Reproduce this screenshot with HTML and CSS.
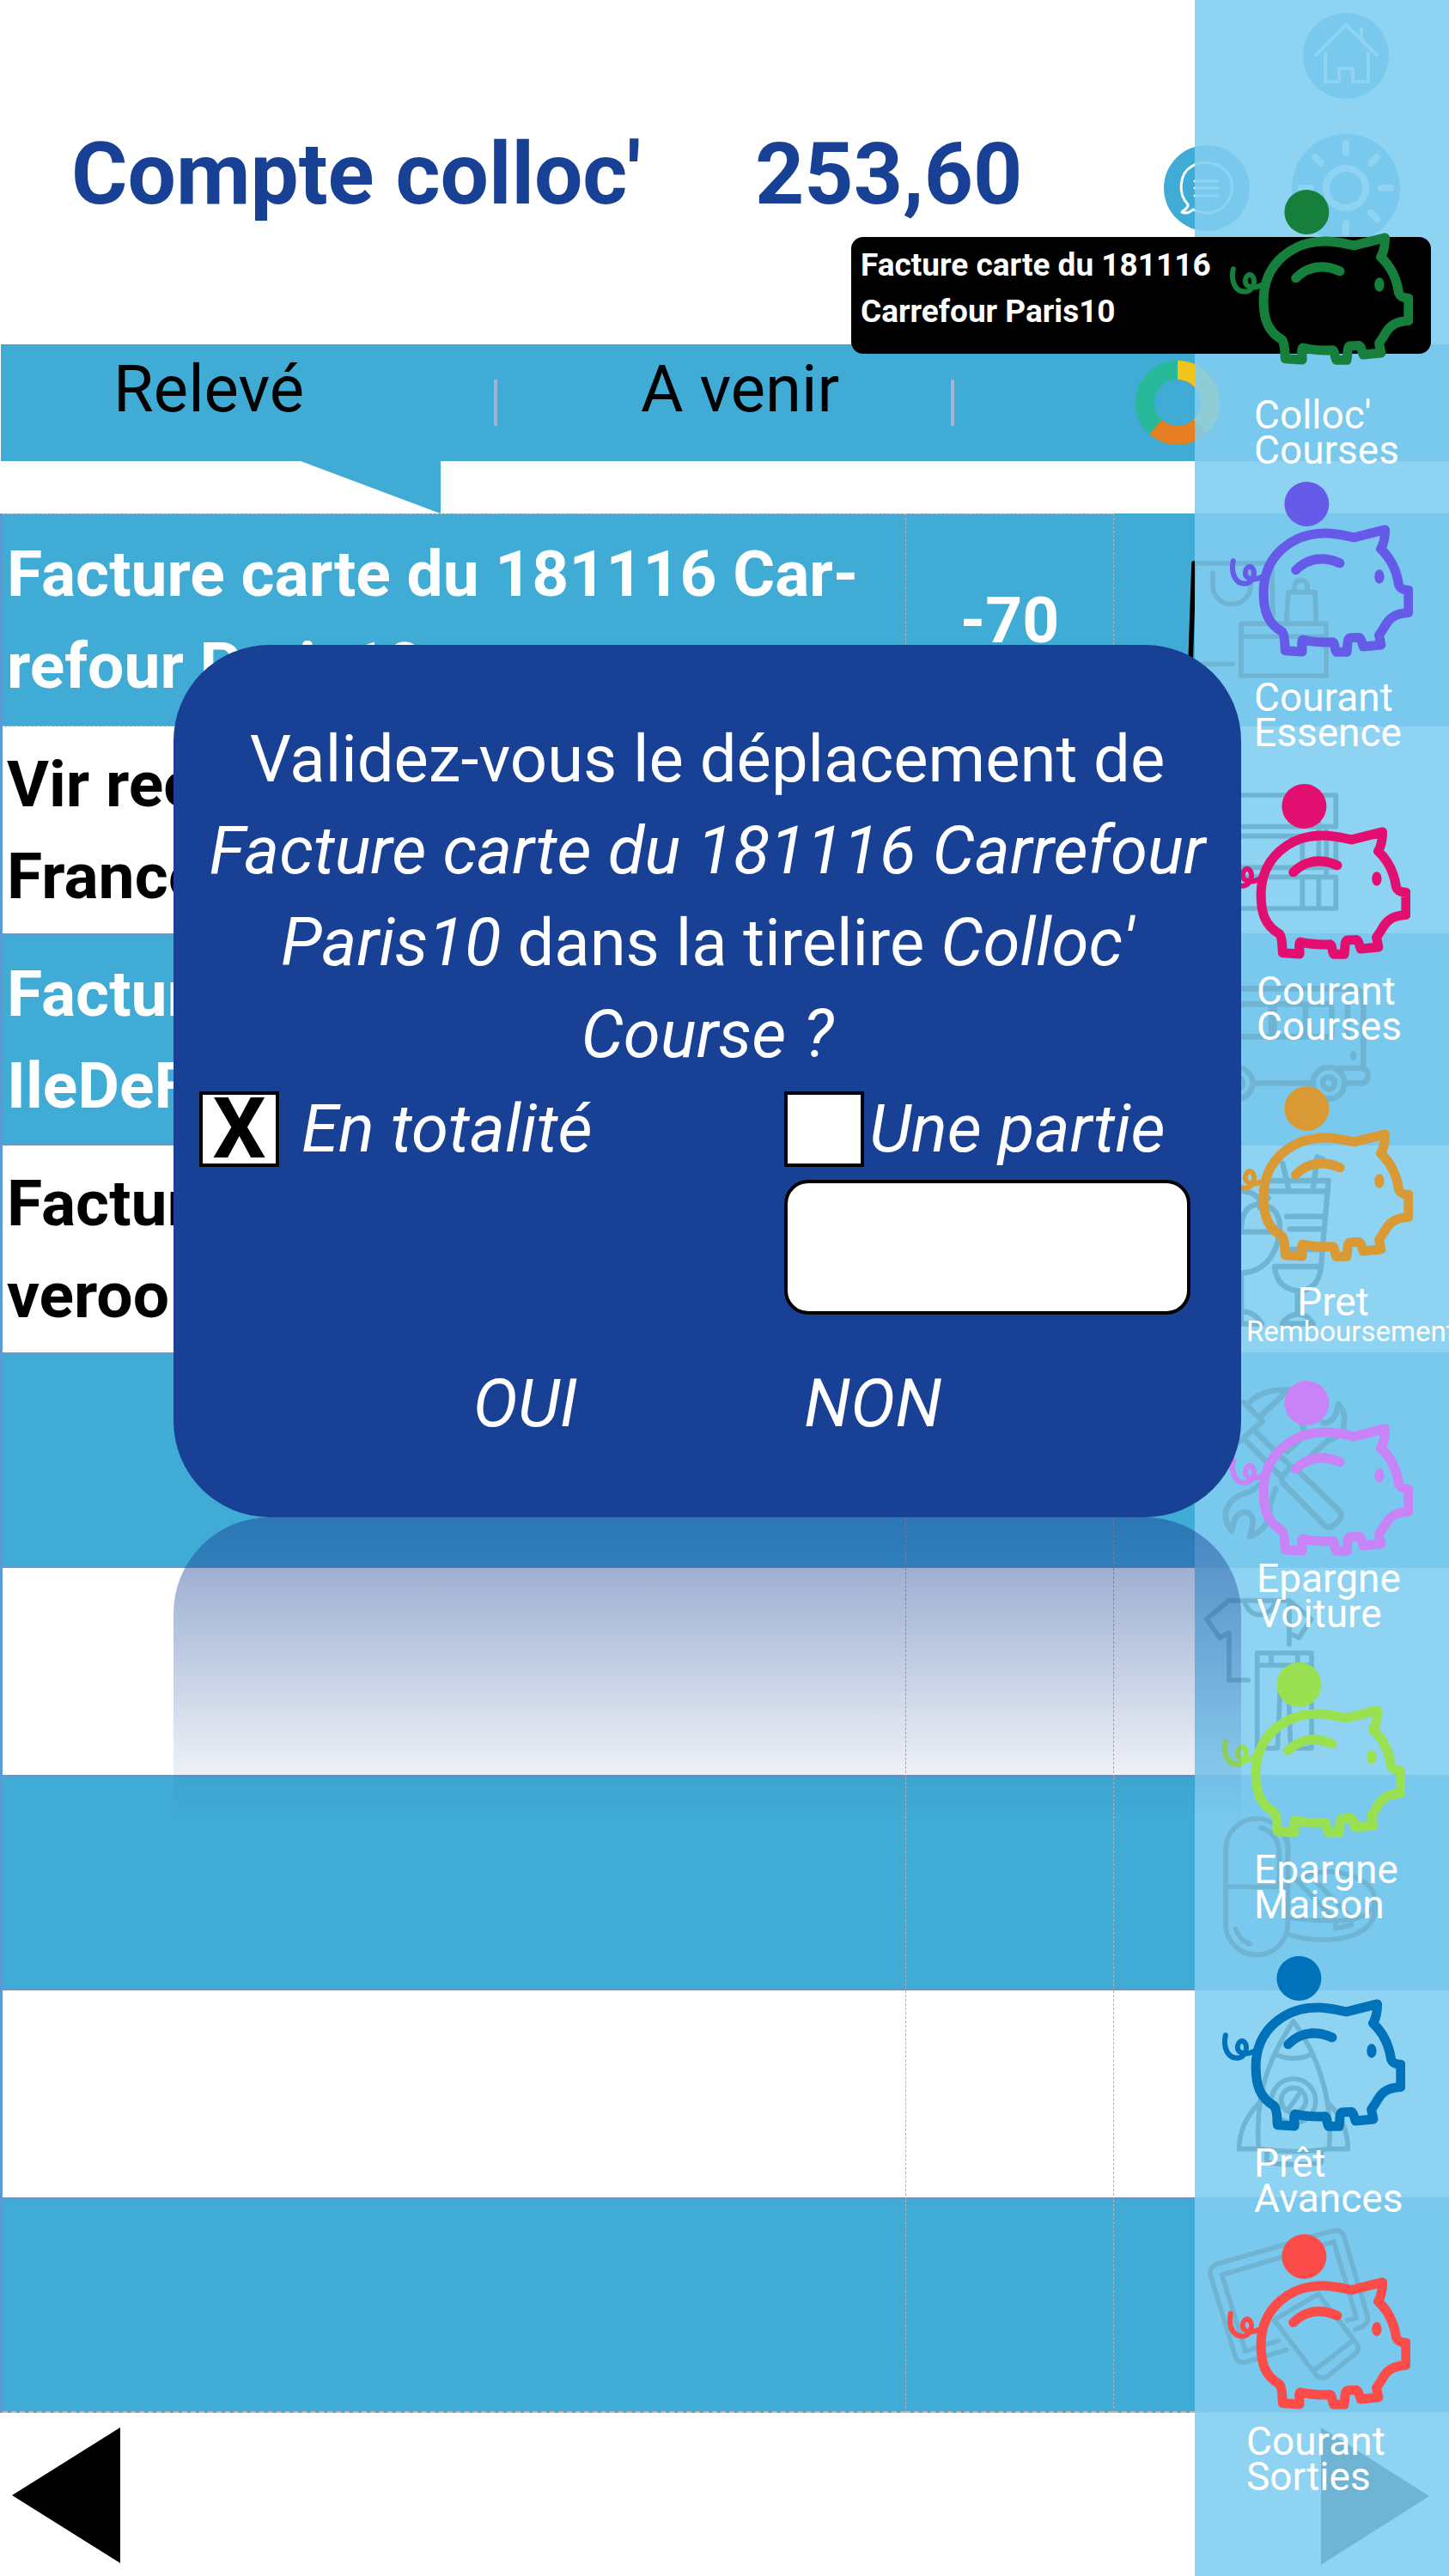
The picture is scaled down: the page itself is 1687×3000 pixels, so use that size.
FILE: index.html
```html
<!DOCTYPE html>
<html lang="fr">
<head>
<meta charset="utf-8">
<meta name="viewport" content="width=device-width, initial-scale=1">
<title>Compte colloc'</title>
<link rel="stylesheet" href="styles.css">
</head>
<body>
<svg class="defs" aria-hidden="true">
  <symbol id="pig" viewBox="216 67 639 613">
    <circle cx="484" cy="145" r="78" fill="currentColor"/>
    <g fill="none" stroke="currentColor" stroke-linecap="round" stroke-linejoin="round">
      <path stroke-width="33" d="M550 247C590 247 620 256 650 262L758 235C758 262 755 282 743 302C780 337 800 385 806 428Q812 446 840 446V525C785 527 768 552 753 580L737 604L744 638L682 644C676 628 674 614 666 612L634 614C624 618 628 650 624 663H588C580 655 584 630 574 628C540 630 500 627 470 620C462 628 470 645 468 662L409 658C406 640 410 610 398 592C345 562 333 515 333 455C333 320 440 247 550 247Z"/>
      <path stroke-width="33" d="M446 376Q510 313 600 352"/>
      <path stroke-width="18" d="M227 344C217 390 236 424 268 424C304 422 308 370 286 364C268 364 262 398 280 404C294 414 310 408 326 400"/>
    </g>
    <ellipse cx="738" cy="399" rx="17" ry="25" fill="currentColor"/>
  </symbol>
</svg>

<div class="page">
  <header class="header">
    <h1 class="account">Compte colloc'</h1>
    <p class="balance">253,60</p>
    <a class="message" href="#messages" aria-label="Messages">
      <svg width="100" height="100" viewBox="0 0 100 100">
        <circle cx="50" cy="50" r="50" fill="#40acd5"/>
        <g fill="none" stroke="#fff" stroke-width="3" stroke-linecap="round" stroke-linejoin="round">
          <path d="M28 69C16 57 18 33 32 25C48 15 72 22 78 40C84 62 68 80 48 79C40 78 36 76 34 75C30 79 24 80 21 78C25 75 29 72 28 69Z"/>
          <path d="M36 42H63M36 50H63M36 59H63"/>
        </g>
      </svg>
    </a>
    <nav class="shortcuts" aria-label="Raccourcis">
      <a href="#accueil" aria-label="Accueil">
        <svg width="100" height="100" viewBox="0 0 100 100">
          <circle cx="50" cy="50" r="50" fill="#40acd5"/>
          <path d="M15 49L50 14L86 49M68 18V30M26 47V80H42V65H58V80H76V47" fill="none" stroke="#fff" stroke-width="4" stroke-linecap="round"/>
        </svg>
      </a>
      <a href="#reglages" aria-label="Réglages">
        <svg width="126" height="126" viewBox="-63 -63 126 126">
          <circle r="63" fill="#40acd5"/>
          <g fill="none" stroke="#fff" stroke-width="8" stroke-linecap="round">
            <circle r="23"/>
            <path d="M0-52V-41M0 52V41M-52 0H-41M52 0H41M-36-36L-29-29M36 36L29 29M-36 36L-29 29M36-36L29-29"/>
          </g>
        </svg>
      </a>
    </nav>
  </header>

  <nav class="tabs" aria-label="Vues du compte">
    <button type="button" class="tab tab-statement">Relevé</button>
    <button type="button" class="tab tab-upcoming">A venir</button>
    <button type="button" class="tab tab-chart" aria-label="Répartition">
      <svg width="98" height="98" viewBox="0 0 98 98" fill="none" stroke-width="22">
        <g transform="rotate(-90 49 49)">
          <circle cx="49" cy="49" r="38" stroke="#27b99a"/>
          <circle cx="49" cy="49" r="38" pathLength="360" stroke="#e67e24" stroke-dasharray="222 138"/>
          <circle cx="49" cy="49" r="38" pathLength="360" stroke="#f1c41a" stroke-dasharray="136 224"/>
        </g>
      </svg>
    </button>
  </nav>
  <div class="notch"></div>

  <table class="operations">
    <colgroup><col><col class="col-amount"><col class="col-category"></colgroup>
    <tbody>
      <tr class="tall selected">
        <td class="name">Facture carte du 181116 Car-<br>refour Paris10</td>
        <td class="amount">-70</td>
        <td class="category"><svg viewBox="-189 183 1170 723">
          <path d="M78 700L90 348H362L366 530M156 382V427A66 64 0 0 0 288 427V382M90 700H225M255 559H552V741H255ZM255 604H552M413 552L420 449H513L517 552M441 445V433A23 26 0 0 1 487 433V445"/>
        </svg></td>
      </tr>
      <tr>
        <td class="name">Vir recu<br>France</td>
        <td class="amount"></td>
        <td class="category"><svg viewBox="-189 -153 1170 723">
          <path d="M180 78H586V188H180ZM180 221H500M180 331H586V221M469 221V331M526 150V331M553 205V364M180 364H586V474H180M469 364V474M526 364V474"/>
        </svg></td>
      </tr>
      <tr>
        <td class="name">Facture<br>IleDeFrance</td>
        <td class="amount"></td>
        <td class="category"><svg viewBox="-189 579 1170 723">
          <path stroke-width="20" d="M180 754H655Q682 760 682 800V1032H600M200 808H360V922H180M370 808H480V922H370ZM490 808H571V922H490M627 808V922M300 1084H500M682 1034C705 1040 704 1082 676 1084H625"/>
          <circle cx="561" cy="1084" r="55" stroke-width="20"/><circle cx="561" cy="1084" r="21" stroke-width="20"/>
          <circle cx="240" cy="1084" r="55" stroke-width="20"/><circle cx="240" cy="1084" r="21" stroke-width="20"/>
          <ellipse cx="647" cy="988" rx="11" ry="17" fill="#000" stroke="none"/>
        </svg></td>
      </tr>
      <tr>
        <td class="name">Facture<br>veroo</td>
        <td class="amount"></td>
        <td class="category"><svg viewBox="-189 291 1170 723">
          <path stroke-width="19" d="M350 405H560L534 705Q525 790 452 790Q378 780 372 705H534M340 442H552M400 345L420 430M540 330L521 322L506 435M415 530H540M425 574H536M420 645H536M452 790V870M398 905H507Q485 870 452 872Q415 875 398 905ZM255 584H390Q396 490 312 488Q258 495 255 570M390 584Q370 720 255 728V905H328Q300 860 255 862M255 440Q330 450 320 500L350 465"/>
        </svg></td>
      </tr>
      <tr class="tall">
        <td class="name"></td>
        <td class="amount"></td>
        <td class="category"><svg viewBox="-189 3 1170 723">
          <path stroke-width="20" d="M264 160L330 225L245 300M278 165Q330 110 420 116L320 210M270 292L395 420L430 385L305 262M395 420L400 440L545 588Q562 605 580 588L598 570Q612 555 598 538L440 385M415 332L465 285Q478 260 470 240M595 165Q625 200 612 250Q595 285 560 292L500 345M595 165Q580 240 540 230M330 440L290 470C210 490 185 540 210 590L222 610Q230 545 270 542Q312 552 285 628Q340 610 355 550Q350 520 375 462"/>
        </svg></td>
      </tr>
      <tr>
        <td class="name"></td>
        <td class="amount"></td>
        <td class="category"><svg viewBox="-189 747 1170 723">
          <path d="M423 1005V852H212L135 917L180 982L213 965V1130H280M423 852L500 917L457 982L423 965M268 860Q285 902 320 902Q358 900 375 860M311 1035H501V1078H311ZM360 1035V1078M452 1035V1078M311 1078V1368H382L392 1140M501 1078V1368H428L420 1160"/>
        </svg></td>
      </tr>
      <tr class="tall">
        <td class="name"></td>
        <td class="amount"></td>
        <td class="category"><svg viewBox="-189 519 1170 723">
          <rect x="201" y="654" width="217" height="476" rx="108"/>
          <path d="M201 892H418M322 685Q388 705 388 780V890M408 712Q420 730 420 760M236 1040Q250 1080 286 1092M452 870Q520 830 600 842Q722 870 722 940Q718 1000 610 1010Q500 1012 430 1000M722 940V985Q700 1070 560 1077Q470 1078 420 1058M445 865L585 1010V1038L640 1025V1000L510 868"/>
        </svg></td>
      </tr>
      <tr>
        <td class="name"></td>
        <td class="amount"></td>
        <td class="category"><svg viewBox="-189 243 1170 723">
          <path d="M437 342C375 440 300 560 316 788H248Q248 700 316 630M437 342C510 440 580 600 562 788H628Q628 700 562 630M375 458Q437 485 500 458M316 788Q440 805 562 788M345 795V835Q440 850 535 835V795M420 650L465 585"/>
          <circle cx="438" cy="620" r="77"/><circle cx="438" cy="618" r="43"/>
        </svg></td>
      </tr>
      <tr class="tall">
        <td class="name"></td>
        <td class="amount"></td>
        <td class="category"><svg viewBox="-189 -45 1170 723">
          <path d="M412 470L270 513Q245 518 235 495L147 205Q145 180 170 170L575 54Q605 48 615 75L696 350Q705 385 655 398M385 438L270 475L188 208L578 92L658 358L625 367M370 365L525 275L660 450Q670 465 655 482L560 560Q540 575 520 562ZM385 385L370 365M512 540L645 438"/>
        </svg></td>
      </tr>
    </tbody>
  </table>

  <footer class="pager">
    <button type="button" class="page-button" aria-label="Précédent"><svg width="126" height="158" viewBox="0 0 126 158"><path d="M126 0V158L0 79Z"/></svg></button>
    <button type="button" class="page-button" aria-label="Suivant"><svg width="126" height="160" viewBox="0 0 126 160"><path d="M0 0V160L126 80Z"/></svg></button>
  </footer>

  <aside class="piggies" aria-label="Tirelires">
    <ul class="piggy-list">
      <li class="piggy green gap-large"><a href="#colloc"><svg class="pig"><use href="#pig"/></svg><span class="label">Colloc'<br>Courses</span></a></li>
      <li class="piggy violet gap-medium"><a href="#essence"><svg class="pig"><use href="#pig"/></svg><span class="label">Courant<br>Essence</span></a></li>
      <li class="piggy pink close"><a href="#courses"><svg class="pig"><use href="#pig"/></svg><span class="label label-far">Courant<br>Courses</span></a></li>
      <li class="piggy orange gap-medium"><a href="#pret"><svg class="pig"><use href="#pig"/></svg><span class="label label-wide">Pret<small>Remboursement</small></span></a></li>
      <li class="piggy mauve gap-small"><a href="#voiture"><svg class="pig"><use href="#pig"/></svg><span class="label label-far">Epargne<br>Voiture</span></a></li>
      <li class="piggy lime shifted"><a href="#maison"><svg class="pig"><use href="#pig"/></svg><span class="label">Epargne<br>Maison</span></a></li>
      <li class="piggy blue shifted"><a href="#avances"><svg class="pig"><use href="#pig"/></svg><span class="label">Prêt<br>Avances</span></a></li>
      <li class="piggy red close"><a href="#sorties"><svg class="pig"><use href="#pig"/></svg><span class="label label-near">Courant<br>Sorties</span></a></li>
    </ul>
  </aside>

  <p class="dragged">Facture carte du 181116<br>Carrefour Paris10</p>

  <form class="dialog" role="dialog" aria-labelledby="question">
    <p class="question" id="question">Validez-vous le déplacement de <em>Facture carte du 181116 Carrefour Paris10</em> dans la tirelire <em>Colloc' Course&nbsp;?</em></p>
    <div class="choices">
      <label class="choice"><input type="checkbox" class="box" checked>En totalité</label>
      <label class="choice choice-part"><input type="checkbox" class="box">Une partie</label>
      <input type="text" class="part" aria-label="Montant de la partie">
    </div>
    <div class="actions">
      <button type="submit" class="action">OUI</button>
      <button type="button" class="action">NON</button>
    </div>
    <div class="reflection" aria-hidden="true"></div>
  </form>
</div>
</body>
</html>
```
FILE: styles.css
```css
* { box-sizing: border-box; }

body {
  margin: 0;
  background: #fff;
  color: #000;
  font-family: Roboto, "Liberation Sans", sans-serif;
  font-size: 76px;
}

h1, p, ul { margin: 0; padding: 0; }
ul { list-style: none; }
a { color: inherit; text-decoration: none; }
svg { display: block; }
button {
  margin: 0;
  padding: 0;
  border: 0;
  background: none;
  color: inherit;
  font: inherit;
}

.defs { position: absolute; width: 0; height: 0; }

.page { position: relative; overflow: hidden; }

/* Account header */
.header {
  display: flex;
  align-items: flex-start;
  height: 401px;
  padding: 15px 57px 0 83px;
  color: #184195;
  font-size: 100px;
  line-height: 126px;
}
.account, .balance {
  padding-top: 125px;
  font-size: inherit;
  font-weight: 700;
}
.account { width: 796px; }
.balance { flex: 1; }
.message { margin: 154px 49px 0 0; }
.shortcuts {
  display: flex;
  flex-direction: column;
  align-items: center;
  gap: 41px;
}

/* Tabs */
.tabs {
  display: flex;
  align-items: center;
  height: 136px;
  margin-left: 1px;
  background: #40acd5;
}
.tab { line-height: 52px; text-align: left; }
.tab-statement, .tab-upcoming {
  position: relative;
  height: 136px;
  padding-bottom: 33px;
}
.tab-statement::after, .tab-upcoming::after {
  content: "";
  position: absolute;
  top: 41px;
  right: 0;
  width: 4px;
  height: 54px;
  background: #a3b3d6;
}
.tab-statement { width: 578px; padding-left: 131px; }
.tab-upcoming { width: 532px; padding-left: 167px; }
.tab-chart { margin-left: 211px; }
.notch {
  width: 163px;
  height: 61px;
  margin-left: 350px;
  background: #40acd5;
  clip-path: polygon(0 0, 100% 0, 100% 100%);
}

/* Operations */
.operations {
  width: 100%;
  table-layout: fixed;
  border-spacing: 0;
  border-left: 3px solid #5b9bd5;
  font-size: 75px;
  font-weight: 700;
  line-height: 107px;
}
.col-amount { width: 242px; }
.col-category { width: 391px; }
.operations tr { height: 244px; }
.operations tr.tall { height: 248px; }
.operations tr:nth-child(odd) { background: #40acd5; }
.operations tr:nth-child(odd) .name { color: #fff; }
.operations td { padding: 0; border-bottom: 3px solid #5b9bd5; }
.operations tr.selected .name,
.operations tr.selected .amount { border-top: 1px dashed #c5b5b5; border-bottom: 1px dashed #c5b5b5; }
.operations tr:last-child td { border-bottom: 2px dashed #c5b5b5; }
.operations .name { padding-left: 5px; white-space: nowrap; }
.operations .amount { border-left: 1px dashed #b5b0b0; color: #fff; text-align: center; }
.operations .category { padding-top: 3px; border-left: 1px dashed #b5b0b0; vertical-align: top; }
.category svg {
  width: 390px;
  height: 241px;
  margin-bottom: -3px;
  fill: none;
  stroke: #000;
  stroke-width: 17px;
  stroke-linecap: round;
  stroke-linejoin: round;
}

.pager {
  display: flex;
  justify-content: space-between;
  align-items: flex-start;
  height: 190px;
  padding: 17px 23px 0 14px;
}

/* Piggy bank panel, laid over the account */
.piggies {
  position: absolute;
  top: 0;
  right: 0;
  bottom: 0;
  width: 296px;
  padding: 221px 0 0 41px;
  overflow: hidden;
  background: rgba(127, 205, 240, 0.88);
  color: #fff;
  font-size: 46px;
  line-height: 41px;
}
.piggy-list {
  display: grid;
  grid-template-rows: 340px 352px 352px 343px 328px 342px 324px auto;
}
.piggy { position: relative; z-index: 2; }
.pig { width: 213px; height: 204px; }
.shifted .pig { margin-left: -9px; }
.close .pig { margin-left: -3px; }
.label { display: block; margin: 17px 0 0 28px; white-space: nowrap; }
.gap-small .label { margin-top: 6px; }
.gap-medium .label { margin-top: 27px; }
.gap-large .label { margin-top: 38px; }
.label-near { margin-left: 19px; }
.label-far { margin-left: 31px; }
.label-wide { width: 184px; text-align: center; }
.label small { display: block; margin-left: -9px; font-size: 33px; line-height: 28px; text-align: left; }
.green .pig { color: #157f3b; }
.violet .pig { color: #665ae8; }
.pink .pig { color: #e20f70; }
.orange .pig { color: #d99a35; }
.mauve .pig { color: #c883f6; }
.lime .pig { color: #99e150; }
.blue .pig { color: #0072ba; }
.red .pig { color: #fb4c4a; }

/* Operation being dragged to a piggy bank */
.dragged {
  position: absolute;
  z-index: 1;
  top: 276px;
  right: 21px;
  width: 675px;
  height: 136px;
  padding: 6px 11px;
  border-radius: 14px;
  background: #000;
  color: #fff;
  font-size: 37px;
  font-weight: 700;
  line-height: 54px;
}

/* Confirmation */
.dialog {
  position: absolute;
  z-index: 3;
  top: 751px;
  left: 202px;
  right: 242px;
  padding: 80px 30px 79px;
  border-radius: 112px;
  background: #184195;
  color: #fff;
  line-height: 107px;
}
.question { text-align: center; }
.question em { font-size: 78px; line-height: 1; }
.choices {
  display: grid;
  grid-template-columns: 681px 1fr;
  row-gap: 15px;
  margin-top: 12px;
  font-size: 78px;
  font-style: italic;
}
.choice { display: flex; align-items: center; gap: 26px; height: 88px; line-height: 88px; }
.choice-part { gap: 6px; }
.box {
  appearance: none;
  display: flex;
  align-items: center;
  justify-content: center;
  width: 93px;
  height: 88px;
  margin: 0;
  border: 4px solid #000;
  background: #fff;
  color: #000;
  font: 700 98px/80px Roboto, "Liberation Sans", sans-serif;
}
.box:checked::before { content: "X"; }
.part {
  grid-column: 2;
  width: 473px;
  height: 157px;
  padding: 0 20px;
  border: 4px solid #000;
  border-radius: 28px;
  background: #fff;
  font: inherit;
}
.actions {
  display: flex;
  justify-content: center;
  gap: 264px;
  margin-top: 50px;
}
.action { font-size: 78px; font-style: italic; line-height: 107px; }
.reflection {
  position: absolute;
  top: 100%;
  left: 0;
  right: 0;
  height: 354px;
  border-radius: 112px 112px 0 0;
  background: linear-gradient(rgba(24, 65, 149, 0.5), rgba(24, 65, 149, 0));
  pointer-events: none;
}
```
